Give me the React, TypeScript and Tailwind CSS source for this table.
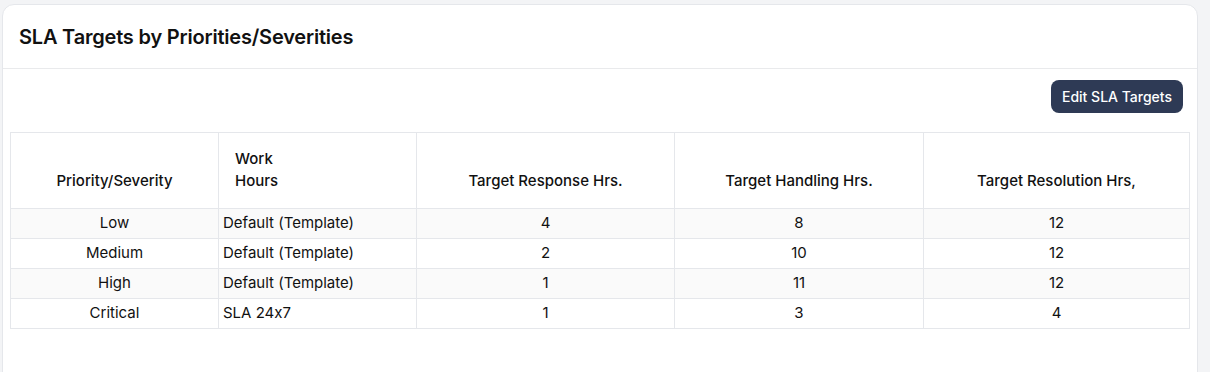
const rows = [
  { priority: 'Low', hours: 'Default (Template)', response: 4, handling: 8, resolution: 12 },
  { priority: 'Medium', hours: 'Default (Template)', response: 2, handling: 10, resolution: 12 },
  { priority: 'High', hours: 'Default (Template)', response: 1, handling: 11, resolution: 12 },
  { priority: 'Critical', hours: 'SLA 24x7', response: 1, handling: 3, resolution: 4 },
];

export default function App() {
  return (
    <div className="min-h-[372px] bg-[#f3f4f6] pt-1 pl-[2px] pr-3 font-['Inter',sans-serif] text-[#111] [font-feature-settings:'calt'_0]">
      <div className="h-[420px] rounded-t-xl border border-[#e5e7eb] bg-white">
        {/* Header */}
        <div className="flex h-[64px] items-center border-b border-[#e9eaec] px-4">
          <h2 className="text-[20px] font-semibold tracking-[-0.2px] text-[#111]">
            SLA Targets by Priorities/Severities
          </h2>
        </div>

        {/* Toolbar */}
        <div className="flex justify-end pr-[14px] pt-[11px] pb-[19px]">
          <button
            type="button"
            className="h-[33px] rounded-lg bg-[#2e3a55] px-[11px] text-[14px] font-medium text-white"
          >
            Edit SLA Targets
          </button>
        </div>

        {/* Table */}
        <div className="px-[7px]">
          <table className="w-full table-fixed border-collapse text-[15px]">
            <colgroup>
              <col className="w-[208px]" />
              <col className="w-[198px]" />
              <col className="w-[258px]" />
              <col className="w-[249px]" />
              <col />
            </colgroup>
            <thead>
              <tr className="h-[76px]">
                <th className="border border-[#e5e7eb] pb-[16px] align-bottom text-[15px] font-medium">
                  Priority/Severity
                </th>
                <th className="border border-[#e5e7eb] pb-[16px] pl-4 align-bottom text-left text-[15px] font-medium">
                  <div className="w-[60px] leading-[22px]">Work Hours</div>
                </th>
                <th className="border border-[#e5e7eb] pb-[16px] align-bottom text-[15px] font-medium">
                  Target Response Hrs.
                </th>
                <th className="border border-[#e5e7eb] pb-[16px] align-bottom text-[15px] font-medium">
                  Target Handling Hrs.
                </th>
                <th className="border border-[#e5e7eb] pb-[16px] align-bottom text-[15px] font-medium">
                  Target Resolution Hrs,
                </th>
              </tr>
            </thead>
            <tbody>
              {rows.map((r, i) => (
                <tr key={r.priority} className={`h-[30px] ${i % 2 === 0 ? 'bg-[#fafafa]' : 'bg-white'}`}>
                  <td className="border border-[#e5e7eb] text-center">{r.priority}</td>
                  <td className="border border-[#e5e7eb] pl-[4px]">{r.hours}</td>
                  <td className="border border-[#e5e7eb] text-center">{r.response}</td>
                  <td className="border border-[#e5e7eb] text-center">{r.handling}</td>
                  <td className="border border-[#e5e7eb] text-center">{r.resolution}</td>
                </tr>
              ))}
            </tbody>
          </table>
        </div>
      </div>
    </div>
  );
}
